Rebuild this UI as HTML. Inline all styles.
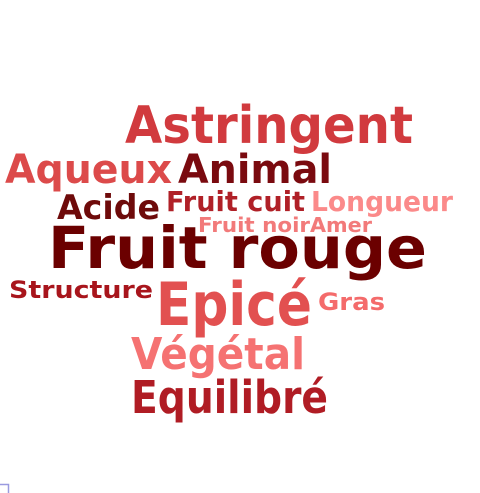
<!DOCTYPE html>
<html><head><meta charset="utf-8"><style>
html,body{margin:0;padding:0;background:#fff;width:480px;height:493px;overflow:hidden}
svg{display:block}
text{font-family:"DejaVu Sans","Liberation Sans",sans-serif;font-weight:bold}
</style></head><body>
<svg width="480" height="493" viewBox="0 0 480 493">
<text x="125" y="143" font-size="52" fill="#d13a3e" textLength="288" lengthAdjust="spacingAndGlyphs">Astringent</text>
<text x="5" y="183" font-size="40" fill="#dc4a4a" textLength="167" lengthAdjust="spacingAndGlyphs">Aqueux</text>
<text x="178" y="183" font-size="40" fill="#7a0a0f" textLength="154" lengthAdjust="spacingAndGlyphs">Animal</text>
<text x="57" y="219" font-size="34" fill="#6e0a0a" textLength="103" lengthAdjust="spacingAndGlyphs">Acide</text>
<text x="166" y="211" font-size="28" fill="#b02027" textLength="139" lengthAdjust="spacingAndGlyphs">Fruit cuit</text>
<text x="311" y="211" font-size="28" fill="#fb8a8a" textLength="142" lengthAdjust="spacingAndGlyphs">Longueur</text>
<text x="198" y="232" font-size="20" fill="#f27a7a" textLength="112" lengthAdjust="spacingAndGlyphs">Fruit noir</text>
<text x="310" y="232" font-size="20" fill="#f27a7a" textLength="62" lengthAdjust="spacingAndGlyphs">Amer</text>
<text x="48" y="268" font-size="58" fill="#6b0000" textLength="379" lengthAdjust="spacingAndGlyphs">Fruit rouge</text>
<text x="9" y="298" font-size="24" fill="#a8151c" textLength="144" lengthAdjust="spacingAndGlyphs">Structure</text>
<text x="156" y="325" font-size="60" fill="#e25050" textLength="156" lengthAdjust="spacingAndGlyphs">Epicé</text>
<text x="318" y="310" font-size="24" fill="#f46b6b" textLength="67" lengthAdjust="spacingAndGlyphs">Gras</text>
<text x="131" y="369" font-size="44" fill="#f57272" textLength="174" lengthAdjust="spacingAndGlyphs">Végétal</text>
<text x="131" y="413" font-size="45" fill="#b01c24" textLength="197" lengthAdjust="spacingAndGlyphs">Equilibré</text>
<path d="M0 484.5 H8.5 V493" fill="none" stroke="#9a9ae0" stroke-width="1.5"/>
</svg>
</body></html>
